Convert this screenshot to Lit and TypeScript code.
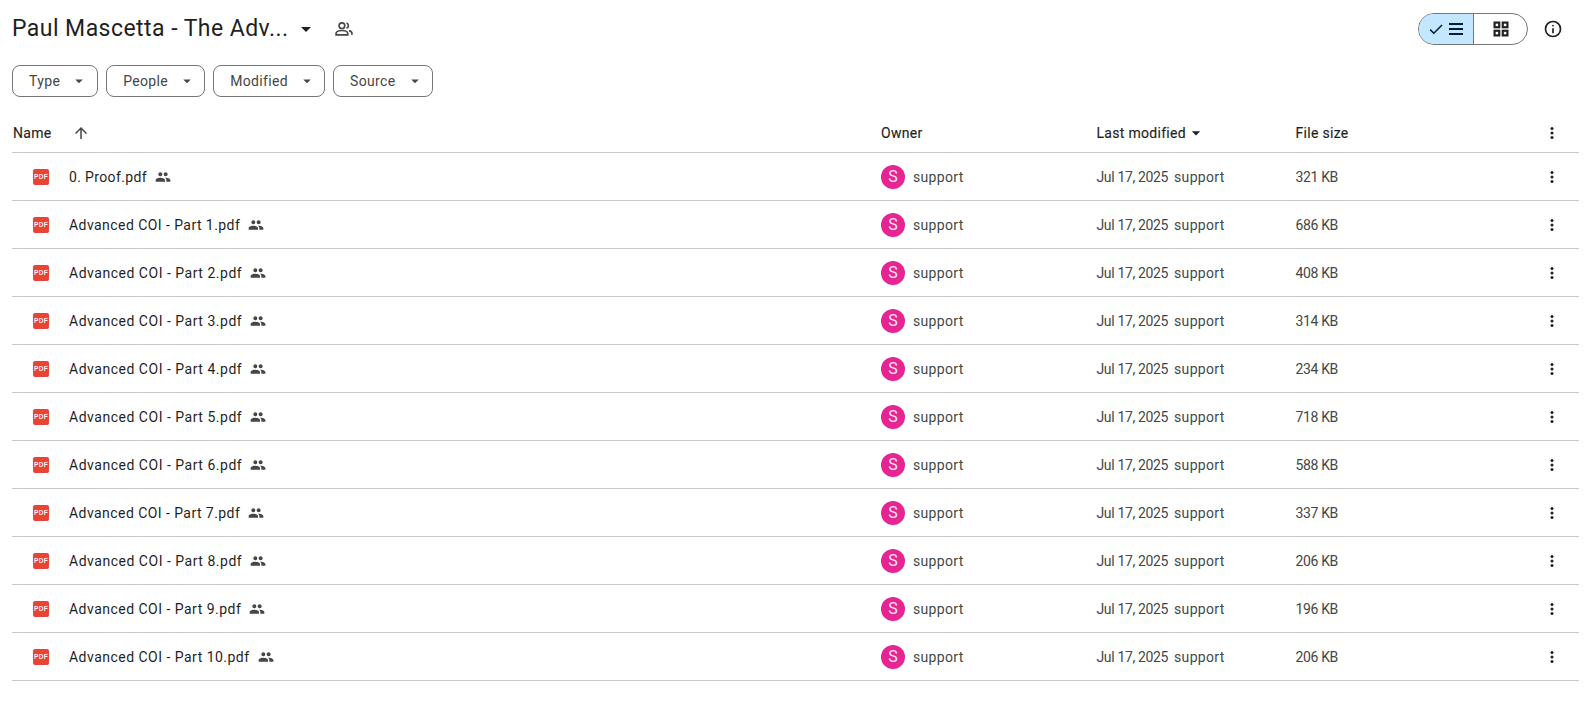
import { LitElement, html, css } from "lit";
import { customElement } from "lit/decorators.js";

const caret = (size: number, cls = "") => html`<svg class=${cls} width=${size} height=${size} viewBox="0 0 24 24"><path d="M7 10l5 5 5-5z" fill="currentColor"/></svg>`;
const peopleFilled = html`<svg class="shared" width="16" height="16" viewBox="0 0 24 24"><path fill="#444746" d="M16 11c1.66 0 2.99-1.34 2.99-3S17.66 5 16 5s-3 1.34-3 3 1.34 3 3 3zm-8 0c1.66 0 2.99-1.34 2.99-3S9.66 5 8 5 5 6.34 5 8s1.34 3 3 3zm0 2c-2.33 0-7 1.17-7 3.5V19h14v-2.5C15 14.17 10.33 13 8 13zm8 0c-.29 0-.62.02-.97.05C16.19 13.89 17 15.02 17 16.5V19h6v-2.5c0-2.33-4.67-3.5-7-3.5z"/></svg>`;
const dots = html`<svg width="20" height="20" viewBox="0 0 20 20"><g fill="#1f1f1f"><circle cx="10" cy="5.5" r="1.5"/><circle cx="10" cy="10" r="1.5"/><circle cx="10" cy="14.5" r="1.5"/></g></svg>`;
const pdf = html`<svg class="pdf" width="16" height="16" viewBox="0 0 16 16"><rect width="16" height="16" rx="2" fill="#ea4335"/><text x="8" y="10.4" text-anchor="middle" font-family="Liberation Sans" font-size="6.6" font-weight="700" fill="#fff" opacity="0.9">PDF</text></svg>`;

const rows: [string, string, number][] = [
  ["0. Proof.pdf", "321 KB", 0.355],
  ["Advanced COI - Part 1.pdf", "686 KB", 0.44],
  ["Advanced COI - Part 2.pdf", "408 KB", 0.52],
  ["Advanced COI - Part 3.pdf", "314 KB", 0.52],
  ["Advanced COI - Part 4.pdf", "234 KB", 0.52],
  ["Advanced COI - Part 5.pdf", "718 KB", 0.52],
  ["Advanced COI - Part 6.pdf", "588 KB", 0.52],
  ["Advanced COI - Part 7.pdf", "337 KB", 0.44],
  ["Advanced COI - Part 8.pdf", "206 KB", 0.52],
  ["Advanced COI - Part 9.pdf", "196 KB", 0.48],
  ["Advanced COI - Part 10.pdf", "206 KB", 0.48],
];

@customElement("app-root")
export class AppRoot extends LitElement {
  static styles = css`
    :host { display: block; font-family: "Roboto", "Liberation Sans", sans-serif; color: #1f1f1f; background: #fff; height: 704px; overflow: hidden; box-sizing: border-box; padding: 0 16px 0 12px; }
    .top { display: flex; align-items: center; height: 58px; }
    .title { font-size: 23px; line-height: 30px; color: #1f1f1f; letter-spacing: 0.45px; width: 283px; white-space: nowrap; }
    .titlecaret { margin-left: -1px; color: #1f1f1f; }
    .folderpeople { margin-left: 16px; color: #444746; }
    .spacer { flex: 1; }
    .toggle { display: flex; width: 110px; height: 32px; border: 1px solid #747775; border-radius: 16px; box-sizing: border-box; overflow: hidden; }
    .toggle .on { width: 55px; box-sizing: border-box; background: #c2e7ff; border-right: 1px solid #747775; display: flex; align-items: center; justify-content: center; gap: 1px; }
    .toggle .off { flex: 1; display: flex; align-items: center; justify-content: center; }
    .info { margin: 0 16px 0 15px; display: block; }
    .filters { display: flex; gap: 8px; height: 32px; margin-top: 7px; }
    .chip { display: flex; align-items: center; height: 32px; box-sizing: border-box; border: 1px solid #747775; border-radius: 8px; padding: 0 8px 0 16px; font-size: 14px; letter-spacing: 0.35px; color: #444746; }
    .chip:first-child { padding-right: 9px; }
    .chip svg { color: #444746; margin-left: 10px; }
    .grid-row { display: grid; grid-template-columns: 869px 215.5px 199px 1fr 54px; align-items: center; border-bottom: 1px solid #c7c7c7; width: 1567px; box-sizing: border-box; }
    .head { height: 56px; padding-top: 16px; font-size: 14px; color: #1f1f1f; }
    .head .cell { display: flex; align-items: center; letter-spacing: 0.3px; -webkit-text-stroke: 0.15px #1f1f1f; }
    .head .name { padding-left: 1px; }
    .arrow { margin-left: 20px; }
    .row { height: 48px; font-size: 14px; color: #444746; }
    .cell { letter-spacing: 0.32px; white-space: nowrap; }
    .filecell { display: flex; align-items: center; padding-left: 21px; color: #1f1f1f; }
    .pdf { margin-right: 20px; flex: none; }
    .shared { margin-left: 8px; }
    .owner { display: flex; align-items: center; }
    .avatar { width: 24px; height: 24px; border-radius: 50%; background: #e52592; color: #fce4f1; font-size: 16px; display: flex; align-items: center; justify-content: center; margin-right: 8px; letter-spacing: 0; }
    .date { letter-spacing: -0.35px; margin-right: 6px; }
    .size { letter-spacing: -0.35px; }
    .menu { display: flex; justify-content: center; }
  `;

  render() {
    return html`
      <div class="top">
        <div class="title">Paul Mascetta - The Adv...</div>
        ${caret(24, "titlecaret")}
        <svg class="folderpeople" width="20" height="20" viewBox="0 0 24 24" fill="none" stroke="#444746" stroke-width="2"><circle cx="9.5" cy="8" r="3.4"/><path d="M2.5 19v-1.8c0-2 3.6-3.4 7-3.4s7 1.4 7 3.4V19z"/><path d="M15 4.8a3.4 3.4 0 010 6.4"/><path d="M18 14c2 .6 3.5 1.6 3.5 3.2V19" /></svg>
        <div class="spacer"></div>
        <div class="toggle">
          <div class="on">
            <svg width="18" height="18" viewBox="0 0 18 18"><path fill="none" stroke="#001d35" stroke-width="1.5" d="M3.2 9.6l3.6 3.6L15 5"/></svg>
            <svg width="20" height="20" viewBox="0 0 20 20"><path fill="#001d35" d="M3 4h14v2H3zm0 5h14v2H3zm0 5h14v2H3z"/></svg>
          </div>
          <div class="off">
            <svg width="20" height="20" viewBox="0 0 24 24" fill="none" stroke="#1f1f1f" stroke-width="2.6"><rect x="4.3" y="4.3" width="5.6" height="5.6"/><rect x="14.1" y="4.3" width="5.6" height="5.6"/><rect x="4.3" y="14.1" width="5.6" height="5.6"/><rect x="14.1" y="14.1" width="5.6" height="5.6"/></svg>
          </div>
        </div>
        <svg class="info" width="20" height="20" viewBox="0 0 24 24"><path fill="#1f1f1f" d="M11 17h2v-6h-2zm1-8a1 1 0 100-2 1 1 0 000 2zm0 13a10 10 0 110-20 10 10 0 010 20zm0-2a8 8 0 100-16 8 8 0 000 16z"/></svg>
      </div>
      <div class="filters">
        ${["Type", "People", "Modified", "Source"].map((t) => html`<div class="chip">${t}${caret(18)}</div>`)}
      </div>
      <div class="grid-row head">
        <div class="cell name">Name
          <svg class="arrow" width="18" height="18" viewBox="0 0 24 24"><path fill="#444746" d="M11 20V7.8l-5.6 5.6L4 12l8-8 8 8-1.4 1.4L13 7.8V20z"/></svg>
        </div>
        <div class="cell">Owner</div>
        <div class="cell">Last modified${caret(20)}</div>
        <div class="cell">File size</div>
        <div class="menu">${dots}</div>
      </div>
      ${rows.map(([n, s, ls]) => html`
        <div class="grid-row row">
          <div class="cell filecell">${pdf}<span style="letter-spacing:${ls}px">${n}</span>${peopleFilled}</div>
          <div class="cell owner"><div class="avatar">S</div>support</div>
          <div class="cell"><span class="date">Jul 17, 2025</span>support</div>
          <div class="cell size">${s}</div>
          <div class="menu">${dots}</div>
        </div>`)}
    `;
  }
}
